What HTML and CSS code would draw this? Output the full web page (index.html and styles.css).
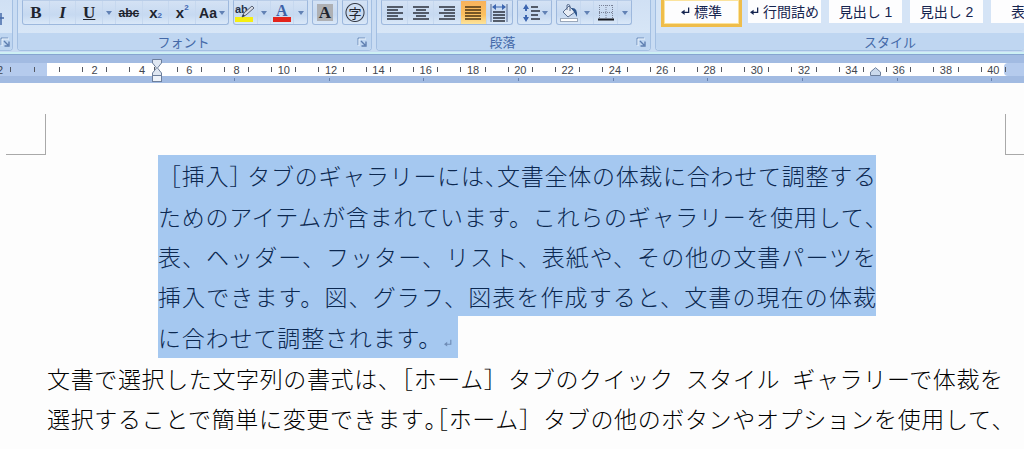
FILE: index.html
```html
<!DOCTYPE html>
<html lang="ja">
<head>
<meta charset="utf-8">
<title>文書</title>
<link rel="stylesheet" href="styles.css">
</head>
<body>
<svg class="defs" aria-hidden="true">
  <symbol id="launch" viewBox="0 0 10 10"><path d="M1 8V1H8" fill="none" stroke="#6f8fbb"/><path d="M2 9V2H9" fill="none" stroke="#fff" opacity=".7"/><path d="M4 4L8 8M9 4.500V9H4.500" fill="none" stroke="#5d7daf" stroke-width="1.400"/></symbol>
  <symbol id="down" viewBox="0 0 6 4"><path d="M0 0H6L3 4Z" fill="#6181b4"/></symbol>
  <symbol id="ret" viewBox="0 0 10 10"><path d="M8.500 1V6.500H3" fill="none" stroke="currentColor" stroke-width="1.400"/><path d="M0 6.500L4 3.500V9.500Z" fill="currentColor"/></symbol>
</svg>
<header class="ribbon">
  <section class="group group-edge">
    <div class="tools"><svg class="edge-icon" viewBox="0 0 4 12"><path d="M1 0V12M0 5H4" stroke="#456aa8" stroke-width="1.500" fill="none"/></svg></div>
    <footer class="caption"><button class="launcher" aria-label="クリップボード"><svg><use href="#launch"/></svg></button></footer>
  </section>
  <section class="group group-font">
    <div class="tools">
      <div class="set set-style">
        <button class="serif bold">B</button>
        <button class="serif italic">I</button>
        <button class="serif under">U</button>
        <button class="drop" aria-label="下線の種類"><svg><use href="#down"/></svg></button>
        <button class="strike">abc</button>
        <button class="script">x<sub>2</sub></button>
        <button class="script">x<sup>2</sup></button>
        <button class="case">Aa<svg class="caret"><use href="#down"/></svg></button>
      </div>
      <div class="set set-color">
        <button aria-label="蛍光ペンの色"><svg width="22" height="20" viewBox="0 0 22 20"><rect x="1" y="14" width="18" height="5" fill="#f5ee12"/><text x="1" y="10" font-family="Liberation Sans" font-size="11" font-weight="bold" fill="#25324b">ab</text><path d="M18 3L20 5L12 12L8 14L10 10Z" fill="#d9dde6" stroke="#596173"/><path d="M8 14L11 13L9 11Z" fill="#333b4d"/></svg></button>
        <button class="drop" aria-label="蛍光ペンの色を選択"><svg><use href="#down"/></svg></button>
        <button aria-label="フォントの色"><svg width="20" height="20" viewBox="0 0 20 20"><text x="4" y="13" font-family="Liberation Serif" font-size="16" font-weight="bold" fill="#3e62a8">A</text><rect x="1" y="14" width="18" height="5" fill="#e3241c"/></svg></button>
        <button class="drop" aria-label="フォントの色を選択"><svg><use href="#down"/></svg></button>
      </div>
      <div class="set set-one"><button class="shade">A</button></div>
      <div class="set set-one"><button class="ring">字</button></div>
    </div>
    <footer class="caption"><span>フォント</span><button class="launcher" aria-label="フォントの設定"><svg><use href="#launch"/></svg></button></footer>
  </section>
  <section class="group group-para">
    <div class="tools">
      <div class="set set-align">
        <button aria-label="左揃え"><svg width="16" height="15" viewBox="0 0 16 15"><path d="M0 2H16M0 5H11M0 8H16M0 11H11M0 14H16" stroke="#2b303c" stroke-width="1.700"/></svg></button>
        <button aria-label="中央揃え"><svg width="16" height="15" viewBox="0 0 16 15"><path d="M0 2H16M3 5H13M0 8H16M3 11H13M0 14H16" stroke="#2b303c" stroke-width="1.700"/></svg></button>
        <button aria-label="右揃え"><svg width="16" height="15" viewBox="0 0 16 15"><path d="M0 2H16M5 5H16M0 8H16M5 11H16M0 14H16" stroke="#2b303c" stroke-width="1.700"/></svg></button>
        <button class="on" aria-label="両端揃え"><svg width="16" height="15" viewBox="0 0 16 15"><path d="M0 2H16M0 5H16M0 8H16M0 11H16M0 14H16" stroke="#4b3413" stroke-width="1.700"/></svg></button>
        <button aria-label="均等割り付け"><svg width="18" height="18" viewBox="0 0 18 18"><path d="M1 0V18M17 0V18" stroke="#54698f"/><path d="M3 3H15" stroke="#3d66b0"/><path d="M2 3L6 0V6ZM16 3L12 0V6Z" fill="#3d66b0"/><path d="M3 8H15M3 11H15M3 14H15M3 17H15" stroke="#2b303c" stroke-width="1.700"/></svg></button>
      </div>
      <div class="set set-space"><button aria-label="行間"><svg width="26" height="18" viewBox="0 0 26 18"><path d="M4 3V7M4 11V15" stroke="#3d66b0" stroke-width="2"/><path d="M1 5L4 0L7 5ZM1 13L4 18L7 13Z" fill="#3d66b0"/><path d="M9 3H16M9 7H18M9 11H16M9 15H18" stroke="#2b303c" stroke-width="1.700"/><path d="M20 7H26L23 11Z" fill="#6181b4"/></svg></button></div>
      <div class="set set-fill">
        <button aria-label="塗りつぶし"><svg width="20" height="18" viewBox="0 0 20 18"><rect x="1.500" y="14.500" width="17" height="3" fill="#fff" stroke="#9ba8ba"/><path d="M4 8L10 2L16 8L9 13Z" fill="#e8edf5" stroke="#596c8d"/><path d="M8 6V1Q10-1 11 2V7" fill="none" stroke="#596c8d"/><path d="M12 4Q19 3 18 13L15 8Z" fill="#31588f"/></svg></button>
        <button class="drop" aria-label="塗りつぶしの色"><svg><use href="#down"/></svg></button>
        <button aria-label="罫線"><svg width="16" height="17" viewBox="0 0 16 17"><path d="M1 1.500H15M1 8.500H15M1.500 1V15M8 1V15M14.500 1V15" stroke="#788196" stroke-dasharray="1 1"/><path d="M0 15.500H16" stroke="#17191f" stroke-width="2"/></svg></button>
        <button class="drop" aria-label="罫線の種類"><svg><use href="#down"/></svg></button>
      </div>
    </div>
    <footer class="caption"><span>段落</span><button class="launcher" aria-label="段落の設定"><svg><use href="#launch"/></svg></button></footer>
  </section>
  <section class="group group-styles">
    <div class="tools gallery">
      <button class="chosen"><svg><use href="#ret"/></svg>標準</button>
      <button><svg><use href="#ret"/></svg>行間詰め</button>
      <button>見出し 1</button>
      <button>見出し 2</button>
      <button class="partial">表</button>
    </div>
    <footer class="caption"><span>スタイル</span></footer>
  </section>
</header>
<div class="ruler">
  <div class="scale">
    <div class="before"><span>2</span><i></i><i></i></div>
    <div class="half"><i></i></div>
    <div class="cells">
      <span><i></i>2<i></i></span><span><i></i>4<i></i></span><span><i></i>6<i></i></span><span><i></i>8<i></i></span><span><i></i>10<i></i></span><span><i></i>12<i></i></span><span><i></i>14<i></i></span><span><i></i>16<i></i></span><span><i></i>18<i></i></span><span><i></i>20<i></i></span><span><i></i>22<i></i></span><span><i></i>24<i></i></span><span><i></i>26<i></i></span><span><i></i>28<i></i></span><span><i></i>30<i></i></span><span><i></i>32<i></i></span><span><i></i>34<i></i></span><span><i></i>36<i></i></span><span><i></i>38<i></i></span><span><i></i>40<i></i></span>
    </div>
    <div class="after"></div>
  </div>
  <div class="tabs"><i></i><i></i><i></i><i></i><i></i><i></i><i></i><i></i><i></i></div>
  <svg class="indent-left" viewBox="0 0 10 24"><path d="M.5.5H9.500V4L5.500 9L9.500 14V16.500H.5V14L4.500 9L.5 4Z" fill="#dfe7f2" stroke="#6d7f9c"/><rect x=".5" y="16.500" width="9" height="6" fill="#eef3fa" stroke="#6d7f9c"/></svg>
  <svg class="indent-right" viewBox="0 0 11 9"><path d="M5.500.7L10.500 5V8.500H.5V5Z" fill="#cbd9ec" stroke="#6d7f9c"/></svg>
</div>
<main class="page">
  <div class="corners"><span class="corner corner-left"></span><span class="corner corner-right"></span></div>
  <div class="text">
    <div class="selected">
      <p class="line first">［挿入<b>］</b> タブのギャラリーには<b>、</b>文書全体の体裁に合わせて調整する</p>
      <p class="line">ためのアイテムが含まれています。これらのギャラリーを使用して<b>、</b></p>
      <p class="line">表、ヘッダー、フッター、リスト、表紙や、その他の文書パーツを</p>
      <p class="line">挿入できます。図、グラフ、図表を作成すると、文書の現在の体裁</p>
      <p class="line last">に合わせて調整されます。<svg class="mark"><use href="#ret"/></svg></p>
    </div>
    <p class="line">文書で選択した文字列の書式は、<b>［</b>ホーム<b>］</b>&ensp;タブのクイック&ensp;スタイル&ensp;ギャラリーで体裁を</p>
    <p class="line">選択することで簡単に変更できます<b>。［</b>ホーム<b>］</b>&ensp;タブの他のボタンやオプションを使用して<b>、</b></p>
  </div>
</main>
</body>
</html>
```
FILE: styles.css
```css
* { box-sizing: border-box; }
body {
  margin: 0;
  background: #fdfdfd;
  overflow: hidden;
  font-family: "Liberation Sans", "Noto Sans CJK JP", sans-serif;
}
.defs { position: absolute; width: 0; height: 0; }
button {
  margin: 0;
  padding: 0;
  border: 0;
  background: none;
  font: inherit;
  color: inherit;
  display: flex;
  align-items: center;
  justify-content: center;
}
svg { display: block; flex: none; }

/* Ribbon */
.ribbon {
  display: flex;
  gap: 4px;
  background: #c9dcf3;
  border-bottom: 1px solid #86a5d0;
  padding-bottom: 3px;
  box-shadow: inset 0 -2px #cdf0f4;
}
.group {
  display: flex;
  flex-direction: column;
  border: 1px solid #a3bfe2;
  border-top: 0;
  border-radius: 0 0 4px 4px;
  background: linear-gradient(#d0e0f4, #dbe9f8);
  overflow: hidden;
  flex: none;
}
.group-edge { width: 13px; border-left: 0; border-radius: 0 0 4px 0; }
.group-font { width: 355px; }
.group-para { width: 275px; }
.group-styles { flex: 1; border-right: 0; }
.tools { display: flex; gap: 4px; height: 33px; padding-left: 4px; align-items: flex-start; }
.group-edge .tools { padding: 13px 0 0; }
.edge-icon { width: 4px; height: 12px; }
.caption {
  display: flex;
  align-items: center;
  height: 17px;
  background: #bfd6f1;
  color: #4469a8;
  font-size: 13px;
  padding-right: 4px;
}
.caption span { flex: 1; text-align: center; padding-right: 8px; }
.group-styles .caption span { padding: 0 0 0 104px; }
.launcher { margin-left: auto; }
.launcher svg { width: 10px; height: 10px; }
.set {
  display: flex;
  align-items: stretch;
  height: 25px;
  border: 1px solid #9db8dd;
  border-top-color: #b9cde8;
  border-radius: 0 0 3px 3px;
  background: linear-gradient(#d4e2f4, #c6d9f1 60%, #dae8f8);
  color: #20242e;
}
.set button { flex: 1; border-right: 1px solid #c6d8ef; }
.set button:last-child { border-right: 0; }
.set .drop { flex: 0 0 13px; }
.drop svg, .caret { width: 6px; height: 4px; }
.caret { margin-left: 2px; }
.set-style { width: 207px; }
.set-color { width: 75px; }
.set-one { width: 26px; }
.set-align { width: 132px; }
.set-space { width: 35px; }
.set-fill { width: 76px; }
.serif { font-family: "Liberation Serif", serif; font-size: 17px; font-weight: bold; }
.italic { font-style: italic; }
.under { text-decoration: underline; }
.strike { font-size: 12px; font-weight: bold; text-decoration: line-through; }
.script { font-size: 15px; font-weight: bold; }
.script sub, .script sup { font-size: 8px; color: #3d66b0; line-height: 8px; }
.script sub { align-self: flex-end; padding-bottom: 4px; }
.script sup { align-self: flex-start; padding-top: 3px; }
.set .case { flex: 0 0 32px; font-size: 14px; font-weight: bold; }
.shade { font-family: "Liberation Serif", serif; font-size: 17px; font-weight: bold; background: linear-gradient(#aeb0b4, #aeb0b4) center / 16px 17px no-repeat; }
.ring { font-size: 13px; background: radial-gradient(circle, transparent 8px, #343945 9px, transparent 10px); }
.set .on { background: linear-gradient(#f7b25c, #fbc05f 60%, #fde49b); }

.gallery { gap: 8px; padding: 0 0 0 5px; background: #d5e4f6; color: #15244f; font-size: 14px; }
.gallery button { width: 73px; height: 23px; background: #fdfdfe; flex: none; gap: 4px; padding-bottom: 2px; }
.gallery .chosen { width: 81px; height: 27px; border: 3px solid #efbd4b; border-top: 0; margin-right: -2px; padding-bottom: 3px; box-shadow: inset 0 0 0 1px #fbe39d; }
.gallery .partial { flex: 1; justify-content: flex-start; padding-left: 20px; }
.gallery svg { width: 9px; height: 10px; }

/* Ruler */
.ruler { position: relative; padding-top: 8px; background: #a2bbe2; font-size: 11px; color: #42464e; }
.scale { display: flex; height: 13px; background: #fff; }
.before { flex: 0 0 47px; display: flex; align-items: center; justify-content: space-between; background: #b5cbed; padding-right: 12px; }
.before span { width: 3px; direction: rtl; margin-right: 7px; }
.before i + i { margin-left: 23px; }
.before i, .half i, .cells i { width: 1px; height: 5px; background: #555962; }
.half { flex: 0 0 24px; display: flex; align-items: center; justify-content: center; }
.cells { flex: 0 0 946px; display: flex; margin-right: -13px; position: relative; z-index: 1; }
.cells span { flex: 1; display: flex; align-items: center; justify-content: space-between; padding: 0 11px; }
.after { flex: 1; background: #b5cbed; border-radius: 4px 0 0 4px; }
.tabs { height: 7px; display: flex; margin-left: 187px; width: 852px; }
.tabs i { flex: 1; background: linear-gradient(#6983b0, #6983b0) center 2px / 1px 3px no-repeat; }
.indent-left { position: absolute; left: 152px; top: 4px; width: 10px; height: 24px; z-index: 2; }
.indent-right { position: absolute; left: 870px; top: 12px; width: 11px; height: 9px; z-index: 2; }

/* Document */
.page { padding-top: 31px; }
.corners { display: flex; justify-content: space-between; height: 41px; }
.corner { border-bottom: 1px solid #a9a9a9; }
.corner-left { width: 40px; margin-left: 6px; border-right: 1px solid #a9a9a9; }
.corner-right { width: 19px; border-left: 1px solid #a9a9a9; }
.text { padding: 0 21px 0 47px; color: #000; font-size: 23px; font-family: "Noto Sans CJK JP", sans-serif; font-weight: 300; }
.line { margin: 0; height: 40px; line-height: 40px; white-space: nowrap; text-align: justify; text-align-last: justify; }
.line b { font-weight: inherit; font-feature-settings: "halt"; }
.selected { margin: 0 127px 0 111px; color: #0c2850; }
.selected .line { background: #a5c8f0; }
.selected .first { height: 41px; }
.selected .last { width: 300px; height: 42px; padding-top: 1px; }
.mark { display: inline-block; width: 8px; height: 8px; margin: 0 6px 0 2px; color: #6f8cb5; }
```
